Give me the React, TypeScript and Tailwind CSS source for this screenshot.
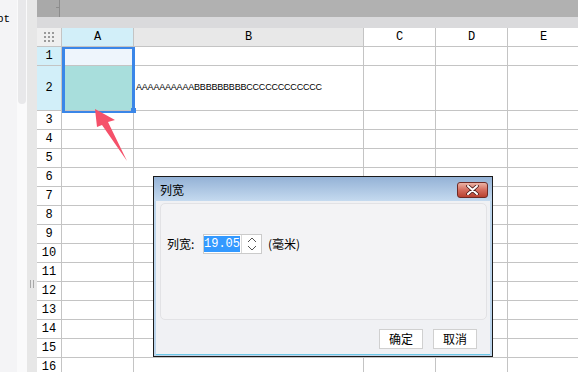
import React from "react";

const mono = { fontFamily: '"Liberation Mono", monospace' };
const cjk = { fontFamily: '"Noto Sans CJK SC", "Liberation Sans", sans-serif' };

const rowHeights = [19, 45, 19, 19, 19, 19, 19, 19, 19, 19, 19, 19, 19, 19, 19, 19];

function Dots() {
  return (
    <div className="grid grid-cols-3 gap-[2px]">
      {Array.from({ length: 9 }).map((_, i) => (
        <div key={i} className="w-[2px] h-[2px] bg-[#9a9a9a]" />
      ))}
    </div>
  );
}

export default function App() {
  return (
    <div className="relative w-[578px] h-[372px] overflow-hidden bg-white flex text-black">
      {/* left panel */}
      <div className="w-[17px] shrink-0 bg-[#f4f4f6] pt-[13px] overflow-hidden">
        <div className="text-[11px] leading-[12px] -ml-[3px]" style={mono}>pt</div>
      </div>
      <div className="w-[10px] shrink-0 bg-[#fafafb] pl-[1px]">
        <div className="w-[8px] h-[104px] rounded-b-[4px] bg-[#e8e8ea]" />
      </div>
      <div className="w-[10px] shrink-0 bg-[#e7e7e7] pt-[280px] pl-[3px]">
        <div className="flex gap-[2px]">
          <div className="w-[1px] h-[8px] bg-[#a8a8a8]" />
          <div className="w-[1px] h-[8px] bg-[#a8a8a8]" />
        </div>
      </div>

      {/* main */}
      <div className="flex-1 flex flex-col min-w-0">
        <div className="h-[17px] bg-[#b1b1b1] flex shrink-0">
          <div className="w-[23px] bg-[#a9a9a9] border-r border-[#8c8c8c] relative">
            <div className="absolute right-0 top-[7px] w-[3px] h-[1px] bg-[#8c8c8c]" />
          </div>
        </div>
        <div className="h-[11px] bg-[#dadadc] shrink-0" />

        <div className="grid grid-cols-[25px_72px_230px_72px_72px_72px]" style={mono}>
          {/* header */}
          <div className="h-[19px] bg-[#efefef] border-r border-b border-[#c4c4c4] flex items-center justify-center">
            <Dots />
          </div>
          <div className="h-[19px] bg-[#d2eff9] border-r border-b border-[#c4c4c4] flex items-center justify-center text-[12px]">A</div>
          <div className="h-[19px] bg-[#e8e8e8] border-r border-b border-[#c4c4c4] flex items-center justify-center text-[12px]">B</div>
          <div className="h-[19px] bg-white border-r border-b border-[#c4c4c4] flex items-center justify-center text-[12px]">C</div>
          <div className="h-[19px] bg-white border-r border-b border-[#c4c4c4] flex items-center justify-center text-[12px]">D</div>
          <div className="h-[19px] bg-white border-r border-b border-[#c4c4c4] flex items-center justify-center text-[12px]">E</div>

          {rowHeights.map((h, i) => {
            const sel = i < 2;
            return (
              <React.Fragment key={i}>
                <div
                  className={`border-r border-b border-[#c4c4c4] flex items-center justify-center text-[12px] ${sel ? "bg-[#d2eff9]" : "bg-white"}`}
                  style={{ height: h }}
                >
                  {i + 1}
                </div>
                <div
                  className={`border-r border-b border-[#c4c4c4] ${i === 0 ? "bg-[#eef5fc]" : i === 1 ? "bg-[#a8dedc]" : "bg-white"}`}
                  style={{ height: h }}
                />
                <div className="border-r border-b border-[#c4c4c4] flex items-center overflow-visible whitespace-nowrap" style={{ height: h }}>
                  {i === 1 && (
                    <span className="pl-[2px] text-[9px] tracking-[-0.2px]" style={{ fontFamily: '"Liberation Sans", sans-serif' }}>
                      AAAAAAAAAABBBBBBBBBCCCCCCCCCCCC
                    </span>
                  )}
                </div>
                <div className="border-r border-b border-[#c4c4c4]" style={{ height: h }} />
                <div className="border-r border-b border-[#c4c4c4]" style={{ height: h }} />
                <div className="border-r border-b border-[#c4c4c4]" style={{ height: h }} />
              </React.Fragment>
            );
          })}
        </div>
      </div>

      {/* selection */}
      <div className="absolute left-[62px] top-[47px] w-[73px] h-[66px] border-x-[3px] border-y-[2px] border-[#3a86e8]" />
      <div className="absolute left-[131px] top-[108px] w-[5px] h-[5px] bg-[#3a86e8]" />

      {/* arrow */}
      <svg className="absolute left-0 top-0" width="578" height="372">
        <polygon points="95,109 115,120 108,122 127,161 102,125 97,127" fill="#f5516a" />
      </svg>

      {/* dialog */}
      <div className="absolute left-[153px] top-[176px] w-[340px] h-[181px] border border-[#1a1a1a] flex flex-col bg-[#bcd5ec]" style={cjk}>
        <div className="h-[24px] shrink-0 bg-gradient-to-b from-[#94b2d6] to-[#c5daef] flex items-center pl-[6px] pt-[2px] relative">
          <span className="text-[12px] leading-none">列宽</span>
          <div className="absolute left-[303px] top-[5px] w-[31px] h-[16px] rounded-[3px] border border-[#6e2a25] bg-gradient-to-b from-[#eab3a6] via-[#d46c5e] to-[#b8402f] flex items-center justify-center">
            <svg width="13" height="10" viewBox="0 0 13 10">
              <path d="M2 1 L11 9 M11 1 L2 9" stroke="#4a1a18" strokeWidth="3.6" strokeLinecap="round" />
              <path d="M2 1 L11 9 M11 1 L2 9" stroke="#ffffff" strokeWidth="2" strokeLinecap="round" />
            </svg>
          </div>
        </div>
        <div className="flex-1 mx-[2px] mb-[1px] border-b border-[#6cc8e6] bg-[#f0f1f4] flex flex-col pt-[2px] pl-[4px] pr-[3px]">
          <div className="h-[117px] rounded-[5px] border border-[#e2e2e5] bg-[#f3f3f5] pl-[6px] pt-[30px]">
            <div className="flex items-center h-[20px] text-[12px]">
              <span className="w-[36px]">列宽:</span>
              <div className="w-[59px] h-[20px] border border-[#cbcbcb] bg-white flex items-center">
                <span className="bg-[#3399ff] text-white text-[12px] leading-[16px] h-[16px] w-[36px]" style={mono}>19.05</span>
                <div className="ml-[1px] w-[20px] h-[18px] border-l border-[#d8d8d8] flex flex-col items-center justify-center gap-[2px]">
                  <svg width="10" height="6" viewBox="0 0 10 6"><path d="M1 5 L5 1 L9 5" stroke="#555" fill="none" strokeWidth="1" /></svg>
                  <svg width="10" height="6" viewBox="0 0 10 6"><path d="M1 1 L5 5 L9 1" stroke="#555" fill="none" strokeWidth="1" /></svg>
                </div>
              </div>
              <span className="ml-[6px]">(毫米)</span>
            </div>
          </div>
          <div className="flex justify-end gap-[10px] pr-[10px] pt-[9px]">
            <div className="w-[44px] h-[20px] border border-[#d0d0d0] bg-white flex items-center justify-center text-[12px]">确定</div>
            <div className="w-[44px] h-[20px] border border-[#d0d0d0] bg-white flex items-center justify-center text-[12px]">取消</div>
          </div>
        </div>
      </div>
    </div>
  );
}
